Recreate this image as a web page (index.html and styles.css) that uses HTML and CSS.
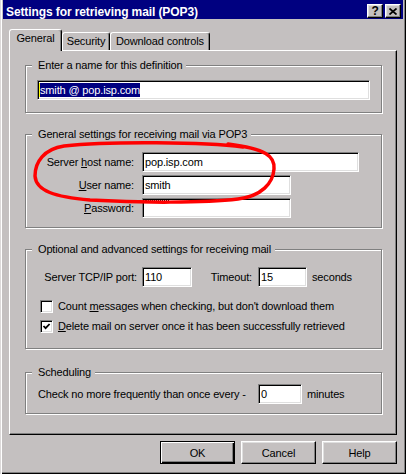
FILE: index.html
```html
<!DOCTYPE html>
<html lang="en">
<head>
    <meta charset="UTF-8">
    <title>Settings for retrieving mail (POP3)</title>
    <link rel="stylesheet" href="styles.css">
</head>
<body>
    <div class="window">
        <div class="titlebar">
            <span class="title">Settings for retrieving mail (POP3)</span>
            <span class="caption-btn help-glyph">?</span>
            <span class="caption-btn">
                <svg width="8" height="7" viewBox="0 0 8 7"><path d="M0.5 0.5 L7.5 6.5 M7.5 0.5 L0.5 6.5" stroke="#000" stroke-width="1.7" fill="none"/></svg>
            </span>
        </div>

        <div class="tabs">
            <div class="tab tab-general active">General</div>
            <div class="tab tab-security">Security</div>
            <div class="tab tab-download">Download controls</div>
        </div>

        <div class="panel">
            <fieldset class="group group-name">
                <legend>Enter a name for this definition</legend>
                <div class="field field-name"><span class="selected">smith @ pop.isp.com</span></div>
            </fieldset>

            <fieldset class="group group-server">
                <legend>General settings for receiving mail via POP3</legend>
                <div class="host-grid">
                    <label class="grid-label">Server <u>h</u>ost name:</label>
                    <div class="field field-host">pop.isp.com</div>
                    <label class="grid-label"><u>U</u>ser name:</label>
                    <div class="field field-user">smith</div>
                    <label class="grid-label"><u>P</u>assword:</label>
                    <div class="field field-user"><span class="masked"></span></div>
                </div>
            </fieldset>

            <fieldset class="group group-options">
                <legend>Optional and advanced settings for receiving mail</legend>
                <div class="port-row">
                    <span class="port-label">Server TCP/IP port:</span>
                    <div class="field field-port">110</div>
                    <span class="timeout-label">Timeout:</span>
                    <div class="field field-timeout">15</div>
                    <span class="unit">seconds</span>
                </div>
                <div class="check-row first">
                    <span class="checkbox"></span>
                    <span>Count <u>m</u>essages when checking, but don't download them</span>
                </div>
                <div class="check-row">
                    <span class="checkbox">
                        <svg width="9" height="9" viewBox="0 0 9 9"><polyline points="1.5,4 3.6,6.2 7.6,2" stroke="#000" stroke-width="1.8" fill="none"/></svg>
                    </span>
                    <span><u>D</u>elete mail on server once it has been successfully retrieved</span>
                </div>
            </fieldset>

            <fieldset class="group group-schedule">
                <legend>Scheduling</legend>
                <div class="sched-row">
                    <span class="sched-label">Check no more frequently than once every -</span>
                    <div class="field field-minutes">0</div>
                    <span class="unit">minutes</span>
                </div>
            </fieldset>
        </div>

        <div class="buttons">
            <button class="btn btn-default">OK</button>
            <button class="btn">Cancel</button>
            <button class="btn">Help</button>
        </div>

        <!-- red pen mark drawn over the server fields -->
        <svg class="scribble" width="406" height="474" viewBox="0 0 406 474">
            <path d="M243 147 C205 142, 110 141, 64 146 C44 149, 35 162, 35 176 C36 191, 55 197, 90 200 C140 203, 205 203, 238 199 C262 196, 273 183, 274 169 C275 156, 266 149, 228 144" stroke="#ff0000" stroke-width="3.5" stroke-linecap="round" fill="none"/>
        </svg>
    </div>
</body>
</html>
```

FILE: styles.css
```css
body {
    margin: 0;
    background: #c4c0c0;
    font-family: "Liberation Sans", Arial, sans-serif;
    font-size: 11px;
    letter-spacing: -0.15px;
    color: #000;
}
.window {
    position: relative;
    width: 406px;
    height: 474px;
    box-sizing: border-box;
    padding: 0 3px;
    background: #c4c0c0;
    box-shadow: inset 1px 0 #dcd9d9, inset 2px 0 #fff, inset -1px -1px #000, inset -2px -2px #808080;
}
.titlebar {
    display: flex;
    align-items: flex-start;
    height: 19px;
    padding: 0 2px 0 3px;
    background: #000080;
    color: #fff;
}
.title {
    flex: 1;
    margin-top: 5px;
    font-size: 12px;
    font-weight: bold;
    letter-spacing: -0.1px;
    line-height: 14px;
}
.caption-btn {
    display: flex;
    align-items: center;
    justify-content: center;
    width: 16px;
    height: 14px;
    box-sizing: border-box;
    margin: 4px 0 0 2px;
    background: #c4c0c0;
    border: 1px solid;
    border-color: #fff #000 #000 #fff;
    box-shadow: inset -1px -1px #808080, inset 1px 1px #dfdfdf;
    color: #000;
}
.help-glyph {
    font-size: 12px;
    font-weight: bold;
    line-height: 12px;
}
.tabs {
    display: flex;
    align-items: flex-end;
    height: 21px;
    margin: 10px 0 0 6px;
}
.tab {
    height: 18px;
    box-sizing: border-box;
    border: 1px solid;
    border-bottom: none;
    border-color: #fff #000 transparent #fff;
    border-radius: 3px 3px 0 0;
    box-shadow: inset -1px 0 #808080;
    background: #c4c0c0;
    text-align: center;
    line-height: 16px;
}
.tab.active {
    position: relative;
    z-index: 1;
    height: 22px;
    margin-bottom: -1px;
    line-height: 17px;
}
.tab-general {
    width: 53px;
}
.tab-security {
    width: 48px;
}
.tab-download {
    width: 100px;
}
.panel {
    width: 388px;
    height: 385px;
    box-sizing: border-box;
    margin-left: 6px;
    padding: 8px 14px 0 15px;
    border: 1px solid;
    border-color: #fff #000 #000 #fff;
    box-shadow: inset -1px -1px #808080;
}
.group {
    min-width: 0;
    margin: 15px 0 0;
    padding: 0 0 12px;
    border: 1px solid #808080;
    box-shadow: inset 1px 1px #fff, 1px 1px #fff;
}
.group-name {
    margin-top: 0;
}
.group-server {
    padding-bottom: 9px;
}
.group-schedule {
    margin-top: 17px;
    padding-bottom: 9px;
}
.group legend {
    margin-left: 6px;
    padding: 0 4px 0 6px;
    line-height: 13px;
    background: #c4c0c0;
}
.field {
    display: flex;
    align-items: center;
    height: 20px;
    box-sizing: border-box;
    padding: 0 2px;
    background: #fff;
    border: 1px solid;
    border-color: #808080 #fff #fff #808080;
    box-shadow: inset 1px 1px #000, inset -1px -1px #dfdfdf;
    white-space: nowrap;
}
.field-name {
    margin: 8px 11px 0;
    padding: 0 1px;
}
.selected {
    background: #000080;
    color: #fff;
    line-height: 14px;
    border-left: 1px solid #ffff00;
}
.host-grid {
    display: grid;
    grid-template-columns: 108px auto;
    column-gap: 8px;
    row-gap: 3px;
    margin-top: 11px;
    justify-items: start;
    align-items: center;
}
.grid-label {
    justify-self: end;
    white-space: nowrap;
}
.field-host {
    width: 217px;
}
.field-user {
    width: 149px;
}
.masked {
    align-self: flex-start;
    width: 24px;
    margin-top: 1px;
    border-top: 1px dotted #000;
}
.port-row,
.sched-row {
    display: flex;
    align-items: center;
    height: 20px;
    margin-top: 11px;
    white-space: nowrap;
}
.port-label {
    display: flex;
    justify-content: flex-end;
    width: 99px;
    margin-left: 17px;
    padding-right: 5px;
    box-sizing: border-box;
}
.field-port {
    width: 50px;
}
.timeout-label {
    display: flex;
    justify-content: flex-end;
    width: 66px;
    padding-right: 6px;
    box-sizing: border-box;
}
.field-timeout {
    width: 49px;
}
.unit {
    margin-left: 5px;
}
.check-row {
    display: flex;
    align-items: center;
    gap: 5px;
    height: 20px;
    margin-left: 14px;
    white-space: nowrap;
}
.check-row.first {
    margin-top: 9px;
}
.checkbox {
    display: flex;
    align-items: center;
    justify-content: center;
    width: 13px;
    height: 13px;
    box-sizing: border-box;
    background: #fff;
    border: 1px solid;
    border-color: #808080 #fff #fff #808080;
    box-shadow: inset 1px 1px #000, inset -1px -1px #dfdfdf;
}
.checkbox svg {
    display: block;
}
.sched-row {
    margin-top: 5px;
}
.sched-label {
    width: 220px;
    margin-left: 12px;
}
.field-minutes {
    width: 44px;
}
.buttons {
    display: flex;
    justify-content: flex-end;
    gap: 6px;
    width: 388px;
    margin: 6px 0 0 6px;
}
.btn {
    width: 75px;
    height: 23px;
    padding: 0;
    font-family: "Liberation Sans", Arial, sans-serif;
    font-size: 11px;
    letter-spacing: -0.15px;
    color: #000;
    background: #c4c0c0;
    border: 1px solid;
    border-color: #fff #000 #000 #fff;
    box-shadow: inset -1px -1px #808080, inset 1px 1px #dfdfdf;
}
.btn-default {
    border-color: #000;
    box-shadow: inset 1px 1px #fff, inset -1px -1px #000, inset -2px -2px #808080;
}
.scribble {
    position: absolute;
    left: 0;
    top: 0;
    pointer-events: none;
}
```
